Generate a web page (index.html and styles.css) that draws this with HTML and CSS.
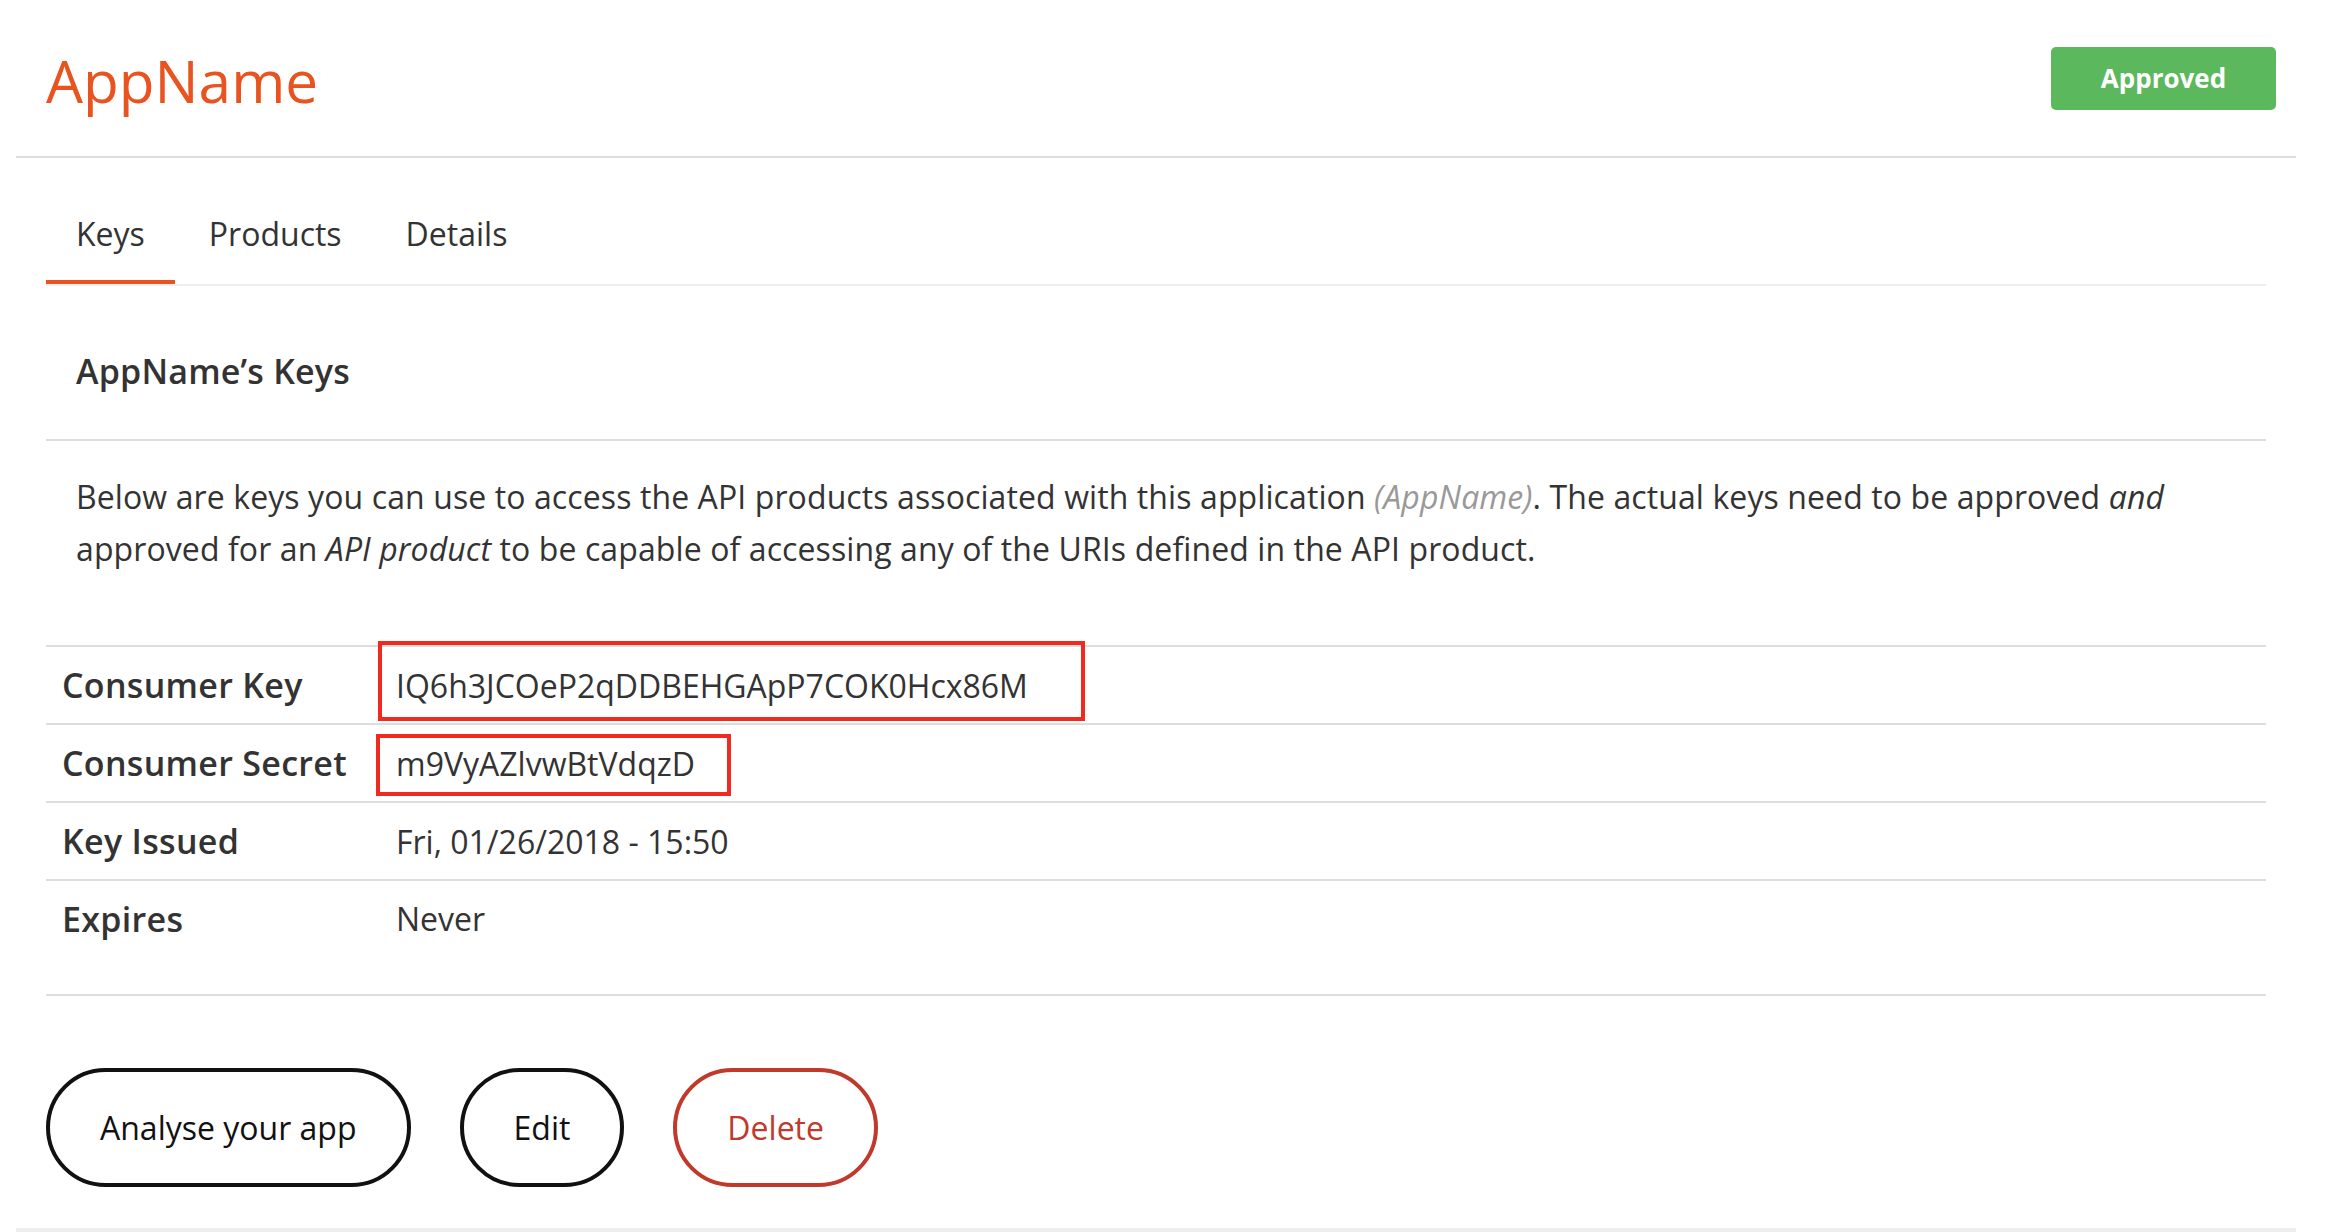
FILE: index.html
```html
<!DOCTYPE html>
<html lang="en">
<head>
<meta charset="utf-8">
<title>AppName</title>
<link rel="stylesheet" href="styles.css">
</head>
<body>
  <header class="page-header">
    <h1 class="app-title">AppName</h1>
    <span class="status-badge">Approved</span>
  </header>
  <main class="content">
    <nav class="tabs">
      <a class="tab active" href="#">Keys</a>
      <a class="tab" href="#">Products</a>
      <a class="tab" href="#">Details</a>
    </nav>
    <section class="keys">
      <h2 class="section-title">AppName’s Keys</h2>
      <p class="intro">Below are keys you can use to access the API products associated with this application <em class="muted">(AppName)</em>. The actual keys need to be approved <em>and</em> approved for an <em>API product</em> to be capable of accessing any of the URIs defined in the API product.</p>
      <div class="key-table">
        <div class="key-row">
          <div class="key-label">Consumer Key</div>
          <div class="key-value mark mark-key">IQ6h3JCOeP2qDDBEHGApP7COK0Hcx86M</div>
        </div>
        <div class="key-row">
          <div class="key-label">Consumer Secret</div>
          <div class="key-value mark mark-secret">m9VyAZlvwBtVdqzD</div>
        </div>
        <div class="key-row">
          <div class="key-label">Key Issued</div>
          <div class="key-value">Fri, 01/26/2018 - 15:50</div>
        </div>
        <div class="key-row">
          <div class="key-label">Expires</div>
          <div class="key-value">Never</div>
        </div>
      </div>
      <div class="actions">
        <button class="btn" type="button">Analyse your app</button>
        <button class="btn" type="button">Edit</button>
        <button class="btn btn-danger" type="button">Delete</button>
      </div>
    </section>
  </main>
  <div class="page-rule"></div>
</body>
</html>
```

FILE: styles.css
```css
*, *::before, *::after { box-sizing: border-box; }

body {
  margin: 0;
  background: #fff;
  color: #333;
  font-family: "Open Sans", "Liberation Sans", sans-serif;
  font-size: 32px;
}

.page-header {
  display: flex;
  justify-content: space-between;
  align-items: center;
  height: 158px;
  margin: 0 38px 0 16px;
  padding: 0 20px 0 30px;
  border-bottom: 2px solid #ddd;
}

.app-title {
  margin: 4px 0 0;
  font-size: 58.5px;
  font-weight: 400;
  line-height: 1;
  color: #e8531f;
}

.status-badge {
  display: flex;
  align-items: center;
  justify-content: center;
  width: 225px;
  height: 63px;
  border-radius: 5px;
  background: #5cb85c;
  color: #fff;
  font-size: 26px;
  font-weight: 700;
}

.content {
  margin: 0 68px 0 46px;
}

.tabs {
  display: flex;
  gap: 4px;
  border-bottom: 2px solid #eee;
}

.tab {
  padding: 52px 30px 22px;
  line-height: 48px;
  color: #333;
  text-decoration: none;
  border-bottom: 4px solid transparent;
}

.tab.active {
  border-bottom-color: #e8531f;
}

.section-title {
  margin: 0;
  padding: 61px 30px 44px;
  font-size: 34px;
  font-weight: 600;
  letter-spacing: 0.2px;
  line-height: 48px;
  border-bottom: 2px solid #ddd;
}

.intro {
  margin: 0 0 70px;
  padding: 30px 30px 0;
  line-height: 52px;
  letter-spacing: 0.1px;
}

.intro em { font-style: italic; }
.intro .muted { color: #999; }

.key-table {
  padding-bottom: 38px;
  border-bottom: 2px solid #ddd;
}

.key-row {
  display: grid;
  grid-template-columns: 332px 1fr;
  height: 78px;
  border-top: 2px solid #ddd;
}

.key-row:last-child { height: 77px; }

.key-label,
.key-value {
  display: flex;
  align-items: center;
}

.key-label {
  padding-left: 16px;
  font-size: 34px;
  font-weight: 600;
  letter-spacing: 0.3px;
}

.key-value {
  padding-left: 18px;
}

.mark { position: relative; }

.mark::after {
  content: "";
  position: absolute;
  border: 4px solid #f12a1f;
}

.mark-key::after {
  left: 0;
  top: -6px;
  width: 707px;
  height: 80px;
}

.mark-secret::after {
  left: -2px;
  top: 9px;
  width: 355px;
  height: 62px;
}

.actions {
  display: flex;
  gap: 49px;
  padding-top: 72px;
}

.btn {
  display: inline-flex;
  align-items: center;
  justify-content: center;
  height: 119px;
  padding: 0 50px;
  border: 4px solid #111;
  border-radius: 60px;
  background: #fff;
  color: #111;
  font-family: inherit;
  font-size: 32px;
}

.btn-danger {
  border-color: #c0392b;
  color: #c0392b;
}

.page-rule {
  height: 6px;
  margin: 41px 38px 0 16px;
  background: #eee;
}
```
